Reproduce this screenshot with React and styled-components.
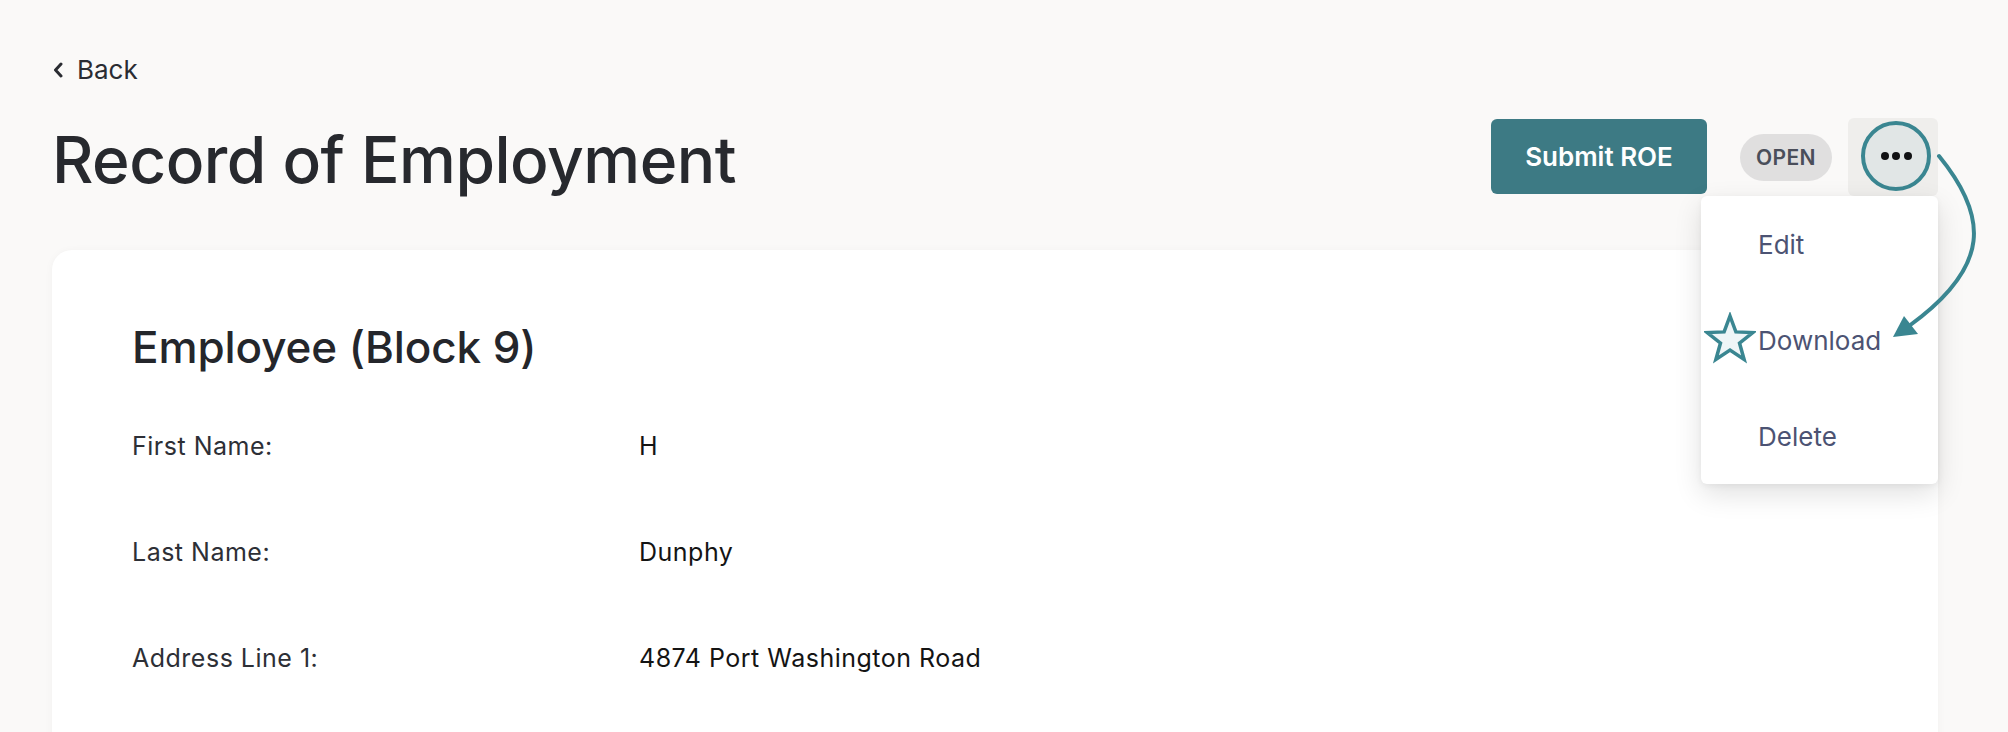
import React from "react";
import styled, { createGlobalStyle } from "styled-components";

const GlobalStyle = createGlobalStyle`
  * { box-sizing: border-box; }
  html, body { margin: 0; padding: 0; }
  body {
    background: #faf9f8;
    font-family: Inter, "Noto Sans", sans-serif;
    color: #27292e;
    overflow: hidden;
  }
`;

const Page = styled.div`
  padding: 52px 70px 0 52px;
`;

const BackLink = styled.a`
  display: flex;
  align-items: center;
  gap: 14px;
  height: 36px;
  font-size: 26px;
  line-height: 36px;
  color: #2a2c32;
  text-decoration: none;
  width: max-content;
  padding-left: 1px;
`;

const Header = styled.div`
  display: flex;
  align-items: center;
  justify-content: space-between;
  margin-top: 30px;
  height: 78px;
`;

const Title = styled.h1`
  margin: 0;
  padding-top: 6px;
  font-size: 64px;
  line-height: 72px;
  font-weight: 500;
  letter-spacing: -0.5px;
  color: #27292e;
`;

const Actions = styled.div`
  display: flex;
  align-items: center;
`;

const PrimaryButton = styled.button`
  width: 216px;
  height: 75px;
  border: 0;
  border-radius: 6px;
  background: #3d7a84;
  color: #fff;
  font-family: inherit;
  font-size: 26px;
  font-weight: 600;
  margin-top: -2px;
`;

const StatusPill = styled.span`
  display: inline-flex;
  align-items: center;
  justify-content: center;
  width: 92px;
  height: 47px;
  margin-left: 33px;
  border-radius: 24px;
  background: #e0dfdf;
  color: #4a4e5a;
  font-size: 21px;
  font-weight: 600;
  letter-spacing: 0.4px;
`;

const MoreWrap = styled.div`
  position: relative;
  margin-left: 16px;
  width: 90px;
  height: 78px;
  border-radius: 6px;
  background: #efeeec;
  display: flex;
  align-items: center;
  justify-content: center;
`;

const MoreButton = styled.button`
  width: 70px;
  height: 70px;
  margin-left: 6px;
  margin-top: -2px;
  border-radius: 50%;
  border: 4px solid #3a8691;
  background: #e1e6e6;
  display: flex;
  align-items: center;
  justify-content: center;
  gap: 3.5px;
  padding: 0;
`;

const Dot = styled.span`
  width: 8px;
  height: 8px;
  border-radius: 50%;
  background: #111214;
`;

const Menu = styled.div`
  position: absolute;
  top: 100%;
  right: 0;
  width: 237px;
  background: #fff;
  border-radius: 6px;
  box-shadow: 0 10px 28px rgba(0, 0, 0, 0.12), 0 2px 6px rgba(0, 0, 0, 0.05);
  z-index: 5;
`;

const MenuItem = styled.div`
  position: relative;
  display: flex;
  align-items: center;
  height: 96px;
  padding-left: 57px;
  font-size: 26px;
  color: #4c5373;
`;

const StarMark = styled.svg`
  position: absolute;
  left: 3px;
  top: 20px;
`;

const ArrowMark = styled.svg`
  position: absolute;
  left: 32px;
  top: 22px;
  overflow: visible;
  z-index: 6;
`;

const Card = styled.section`
  margin-top: 54px;
  background: #fff;
  border-radius: 20px;
  box-shadow: 0 1px 8px rgba(0, 0, 0, 0.04);
  padding: 72px 80px 120px 80px;
`;

const SectionTitle = styled.h2`
  margin: 0;
  font-size: 44px;
  line-height: 50px;
  font-weight: 500;
  color: #24262b;
  letter-spacing: -0.1px;
`;

const Fields = styled.dl`
  margin: 56px 0 0 0;
  display: grid;
  grid-template-columns: 507px 1fr;
  row-gap: 70px;
`;

const Label = styled.dt`
  margin: 0;
  font-size: 25px;
  line-height: 36px;
  letter-spacing: 0.5px;
  color: #2d2f36;
`;

const Value = styled.dd`
  margin: 0;
  font-size: 25px;
  line-height: 36px;
  letter-spacing: 0.5px;
  color: #141414;
`;

const rows = [
  ["First Name:", "H"],
  ["Last Name:", "Dunphy"],
  ["Address Line 1:", "4874 Port Washington Road"],
];

function starPoints(cx, cy, R, r) {
  const pts = [];
  for (let i = 0; i < 10; i++) {
    const rad = i % 2 === 0 ? R : r;
    const a = -Math.PI / 2 + (i * Math.PI) / 5;
    pts.push(`${(cx + rad * Math.cos(a)).toFixed(2)},${(cy + rad * Math.sin(a)).toFixed(2)}`);
  }
  return pts.join(" ");
}

export default function App() {
  return (
    <>
      <GlobalStyle />
      <Page>
        <BackLink href="#">
          <svg width="10" height="16" viewBox="0 0 10 16">
            <polyline points="8,2 2.5,8 8,14" fill="none" stroke="#2a2c32" strokeWidth="3" strokeLinecap="round" strokeLinejoin="round" />
          </svg>
          Back
        </BackLink>
        <Header>
          <Title>Record of Employment</Title>
          <Actions>
            <PrimaryButton>Submit ROE</PrimaryButton>
            <StatusPill>OPEN</StatusPill>
            <MoreWrap>
              <MoreButton aria-label="More actions">
                <Dot />
                <Dot />
                <Dot />
              </MoreButton>
              <Menu>
                <MenuItem>Edit</MenuItem>
                <MenuItem>
                  <StarMark width="52" height="52" viewBox="0 0 52 52">
                    <polygon points={starPoints(26, 28, 24, 10)} fill="#eef5f7" stroke="#3a8691" strokeWidth="3.5" strokeLinejoin="miter" />
                  </StarMark>
                  Download
                </MenuItem>
                <MenuItem>Delete</MenuItem>
              </Menu>
              <ArrowMark width="110" height="210" viewBox="0 0 110 210">
                <path d="M59 16 C 108 76, 112 126, 29 186" fill="none" stroke="#3a8691" strokeWidth="4" strokeLinecap="round" />
                <polygon points="13,197 24,176 38,194" fill="#3a8691" />
              </ArrowMark>
            </MoreWrap>
          </Actions>
        </Header>
        <Card>
          <SectionTitle>Employee (Block 9)</SectionTitle>
          <Fields>
            {rows.map(([l, v]) => (
              <React.Fragment key={l}>
                <Label>{l}</Label>
                <Value>{v}</Value>
              </React.Fragment>
            ))}
          </Fields>
        </Card>
      </Page>
    </>
  );
}
